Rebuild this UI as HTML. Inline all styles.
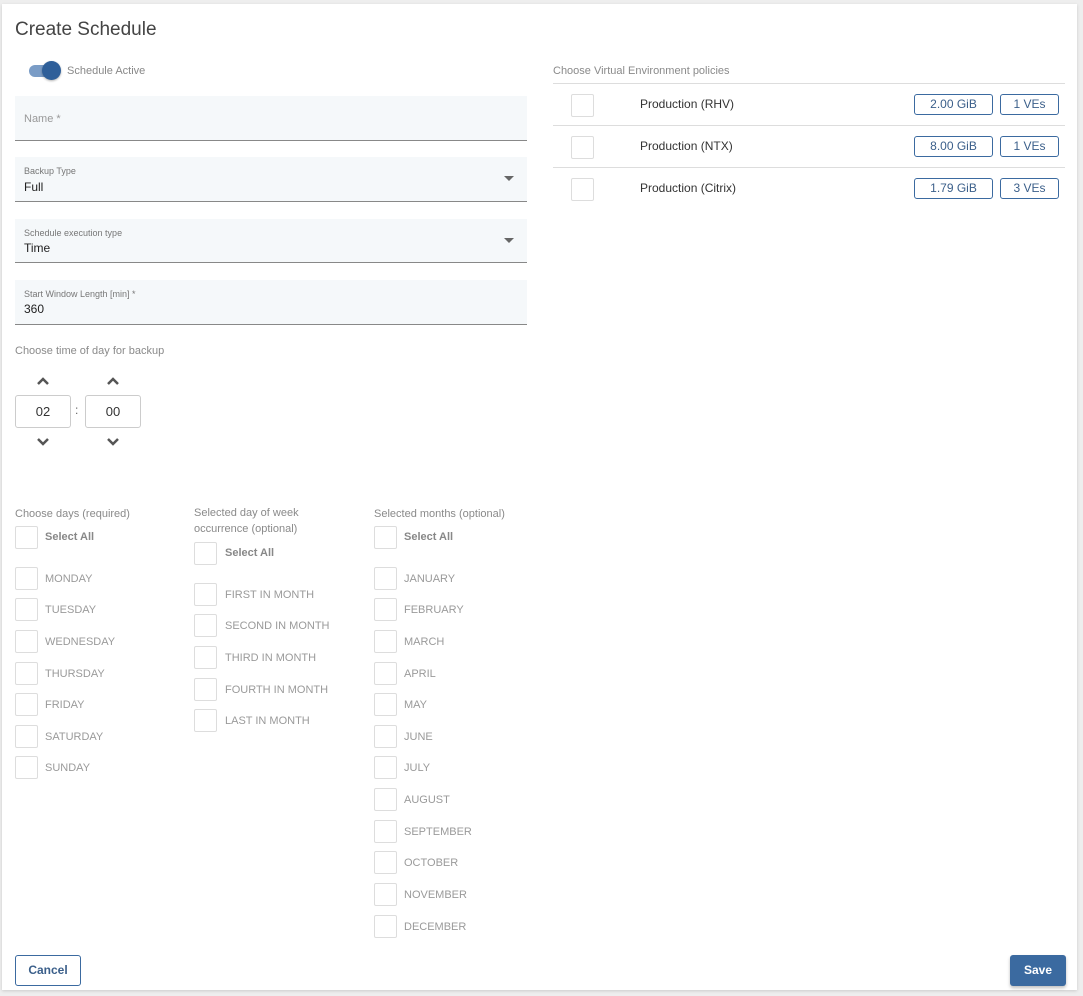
<!DOCTYPE html>
<html><head><style>
*{box-sizing:border-box;margin:0;padding:0}
body{width:1083px;height:996px;background:#eeeeee;font-family:"Liberation Sans",Arial,sans-serif;position:relative;overflow:hidden}
.card{position:absolute;left:2px;top:4px;width:1075px;height:986px;background:#fff;box-shadow:0 1px 3px rgba(0,0,0,.15)}
.a{position:absolute}
.t{position:absolute;white-space:nowrap}
.field{position:absolute;left:15px;width:512px;background:#f5f8fa;border-bottom:1px solid #888}
.cb{position:absolute;width:23px;height:23px;border:1px solid #ddd;border-radius:2px;background:#fff}
.lbl{position:absolute;font-size:11px;color:#9a9a9a;white-space:nowrap;margin-top:1px}
.hdr{position:absolute;font-size:11px;color:#8a8a8a;line-height:16px;margin-top:1px}
.tag{position:absolute;height:21px;border:1px solid #3b6aa0;border-radius:3px;color:#3b5f8a;font-size:12px;text-align:center;line-height:19px}
.row{position:absolute;left:553px;width:512px;height:42px;border-top:1px solid #ddd}
.chev{position:absolute;width:14px;height:10px}
</style></head><body>
<div class="card"></div>
<div class="t" style="left:15px;top:19px;font-size:19px;color:#444">Create Schedule</div>
<div class="a" style="left:29px;top:65px;width:30px;height:12px;border-radius:6px;background:#7a9cc6"></div>
<div class="a" style="left:42px;top:61px;width:19px;height:19px;border-radius:50%;background:#2f5f99;box-shadow:0 1px 2px rgba(0,0,0,.3)"></div>
<div class="t" style="left:67px;top:65px;font-size:11px;color:#888">Schedule Active</div>

<div class="field" style="top:96px;height:45px"><div class="t" style="left:9px;top:17px;font-size:11px;color:#999">Name *</div></div>
<div class="field" style="top:157px;height:45px"><div class="t" style="left:9px;top:9px;font-size:9px;color:#777">Backup Type</div><div class="t" style="left:9px;top:23px;font-size:12px;color:#222">Full</div><div class="a" style="left:489px;top:19px;border-left:5px solid transparent;border-right:5px solid transparent;border-top:5px solid #666"></div></div>
<div class="field" style="top:219px;height:44px"><div class="t" style="left:9px;top:9px;font-size:9px;color:#777">Schedule execution type</div><div class="t" style="left:9px;top:22px;font-size:12px;color:#222">Time</div><div class="a" style="left:489px;top:19px;border-left:5px solid transparent;border-right:5px solid transparent;border-top:5px solid #666"></div></div>
<div class="field" style="top:280px;height:45px"><div class="t" style="left:9px;top:9px;font-size:9px;color:#777">Start Window Length [min] *</div><div class="t" style="left:9px;top:22px;font-size:12px;color:#222">360</div></div>

<div class="t" style="left:15px;top:345px;font-size:11px;color:#8a8a8a">Choose time of day for backup</div>
<svg class="chev" style="left:36px;top:376px" viewBox="0 0 14 10"><path d="M2 8L7 3L12 8" stroke="#555" stroke-width="2.5" fill="none"/></svg>
<svg class="chev" style="left:106px;top:376px" viewBox="0 0 14 10"><path d="M2 8L7 3L12 8" stroke="#555" stroke-width="2.5" fill="none"/></svg>
<div class="a" style="left:15px;top:395px;width:56px;height:33px;border:1px solid #ccc;border-radius:3px;text-align:center;line-height:31px;font-size:13px;color:#333">02</div>
<div class="t" style="left:75px;top:403px;font-size:12px;color:#666">:</div>
<div class="a" style="left:85px;top:395px;width:56px;height:33px;border:1px solid #ccc;border-radius:3px;text-align:center;line-height:31px;font-size:13px;color:#333">00</div>
<svg class="chev" style="left:36px;top:437px" viewBox="0 0 14 10"><path d="M2 2L7 7L12 2" stroke="#555" stroke-width="2.5" fill="none"/></svg>
<svg class="chev" style="left:106px;top:437px" viewBox="0 0 14 10"><path d="M2 2L7 7L12 2" stroke="#555" stroke-width="2.5" fill="none"/></svg>

<div class="hdr" style="left:15px;top:505px">Choose days (required)</div>
<div class="hdr" style="left:194px;top:504px">Selected day of week<br>occurrence (optional)</div>
<div class="hdr" style="left:374px;top:505px">Selected months (optional)</div>

<div class="cb" style="left:15px;top:526px"></div><div class="lbl" style="left:45px;top:530px;font-weight:bold;color:#888">Select All</div>
<div class="cb" style="left:194px;top:542px"></div><div class="lbl" style="left:225px;top:546px;font-weight:bold;color:#888">Select All</div>
<div class="cb" style="left:374px;top:526px"></div><div class="lbl" style="left:404px;top:530px;font-weight:bold;color:#888">Select All</div>

<div class="cb" style="left:15px;top:567px"></div><div class="lbl" style="left:45px;top:572px">MONDAY</div>
<div class="cb" style="left:15px;top:598px"></div><div class="lbl" style="left:45px;top:603px">TUESDAY</div>
<div class="cb" style="left:15px;top:630px"></div><div class="lbl" style="left:45px;top:635px">WEDNESDAY</div>
<div class="cb" style="left:15px;top:662px"></div><div class="lbl" style="left:45px;top:667px">THURSDAY</div>
<div class="cb" style="left:15px;top:693px"></div><div class="lbl" style="left:45px;top:698px">FRIDAY</div>
<div class="cb" style="left:15px;top:725px"></div><div class="lbl" style="left:45px;top:730px">SATURDAY</div>
<div class="cb" style="left:15px;top:756px"></div><div class="lbl" style="left:45px;top:761px">SUNDAY</div>

<div class="cb" style="left:194px;top:583px"></div><div class="lbl" style="left:225px;top:588px">FIRST IN MONTH</div>
<div class="cb" style="left:194px;top:614px"></div><div class="lbl" style="left:225px;top:619px">SECOND IN MONTH</div>
<div class="cb" style="left:194px;top:646px"></div><div class="lbl" style="left:225px;top:651px">THIRD IN MONTH</div>
<div class="cb" style="left:194px;top:678px"></div><div class="lbl" style="left:225px;top:683px">FOURTH IN MONTH</div>
<div class="cb" style="left:194px;top:709px"></div><div class="lbl" style="left:225px;top:714px">LAST IN MONTH</div>

<div class="cb" style="left:374px;top:567px"></div><div class="lbl" style="left:404px;top:572px">JANUARY</div>
<div class="cb" style="left:374px;top:598px"></div><div class="lbl" style="left:404px;top:603px">FEBRUARY</div>
<div class="cb" style="left:374px;top:630px"></div><div class="lbl" style="left:404px;top:635px">MARCH</div>
<div class="cb" style="left:374px;top:662px"></div><div class="lbl" style="left:404px;top:667px">APRIL</div>
<div class="cb" style="left:374px;top:693px"></div><div class="lbl" style="left:404px;top:698px">MAY</div>
<div class="cb" style="left:374px;top:725px"></div><div class="lbl" style="left:404px;top:730px">JUNE</div>
<div class="cb" style="left:374px;top:756px"></div><div class="lbl" style="left:404px;top:761px">JULY</div>
<div class="cb" style="left:374px;top:788px"></div><div class="lbl" style="left:404px;top:793px">AUGUST</div>
<div class="cb" style="left:374px;top:820px"></div><div class="lbl" style="left:404px;top:825px">SEPTEMBER</div>
<div class="cb" style="left:374px;top:851px"></div><div class="lbl" style="left:404px;top:856px">OCTOBER</div>
<div class="cb" style="left:374px;top:883px"></div><div class="lbl" style="left:404px;top:888px">NOVEMBER</div>
<div class="cb" style="left:374px;top:915px"></div><div class="lbl" style="left:404px;top:920px">DECEMBER</div>

<div class="t" style="left:553px;top:65px;font-size:11px;color:#8a8a8a">Choose Virtual Environment policies</div>
<div class="row" style="top:83px"><div class="cb" style="left:18px;top:10px"></div><div class="t" style="left:87px;top:13px;font-size:12px;color:#333">Production (RHV)</div><div class="tag" style="left:361px;top:10px;width:79px">2.00 GiB</div><div class="tag" style="left:447px;top:10px;width:59px">1 VEs</div></div>
<div class="row" style="top:125px"><div class="cb" style="left:18px;top:10px"></div><div class="t" style="left:87px;top:13px;font-size:12px;color:#333">Production (NTX)</div><div class="tag" style="left:361px;top:10px;width:79px">8.00 GiB</div><div class="tag" style="left:447px;top:10px;width:59px">1 VEs</div></div>
<div class="row" style="top:167px"><div class="cb" style="left:18px;top:10px"></div><div class="t" style="left:87px;top:13px;font-size:12px;color:#333">Production (Citrix)</div><div class="tag" style="left:361px;top:10px;width:79px">1.79 GiB</div><div class="tag" style="left:447px;top:10px;width:59px">3 VEs</div></div>

<div class="a" style="left:15px;top:955px;width:66px;height:31px;border:1px solid #3b6aa0;border-radius:3px;color:#3b5f8a;font-size:12px;font-weight:bold;text-align:center;line-height:29px">Cancel</div>
<div class="a" style="left:1010px;top:955px;width:56px;height:31px;background:#3b6aa0;border-radius:3px;color:#fff;font-size:12px;font-weight:bold;text-align:center;line-height:31px;box-shadow:0 2px 3px rgba(0,0,0,.25)">Save</div>
</body></html>
